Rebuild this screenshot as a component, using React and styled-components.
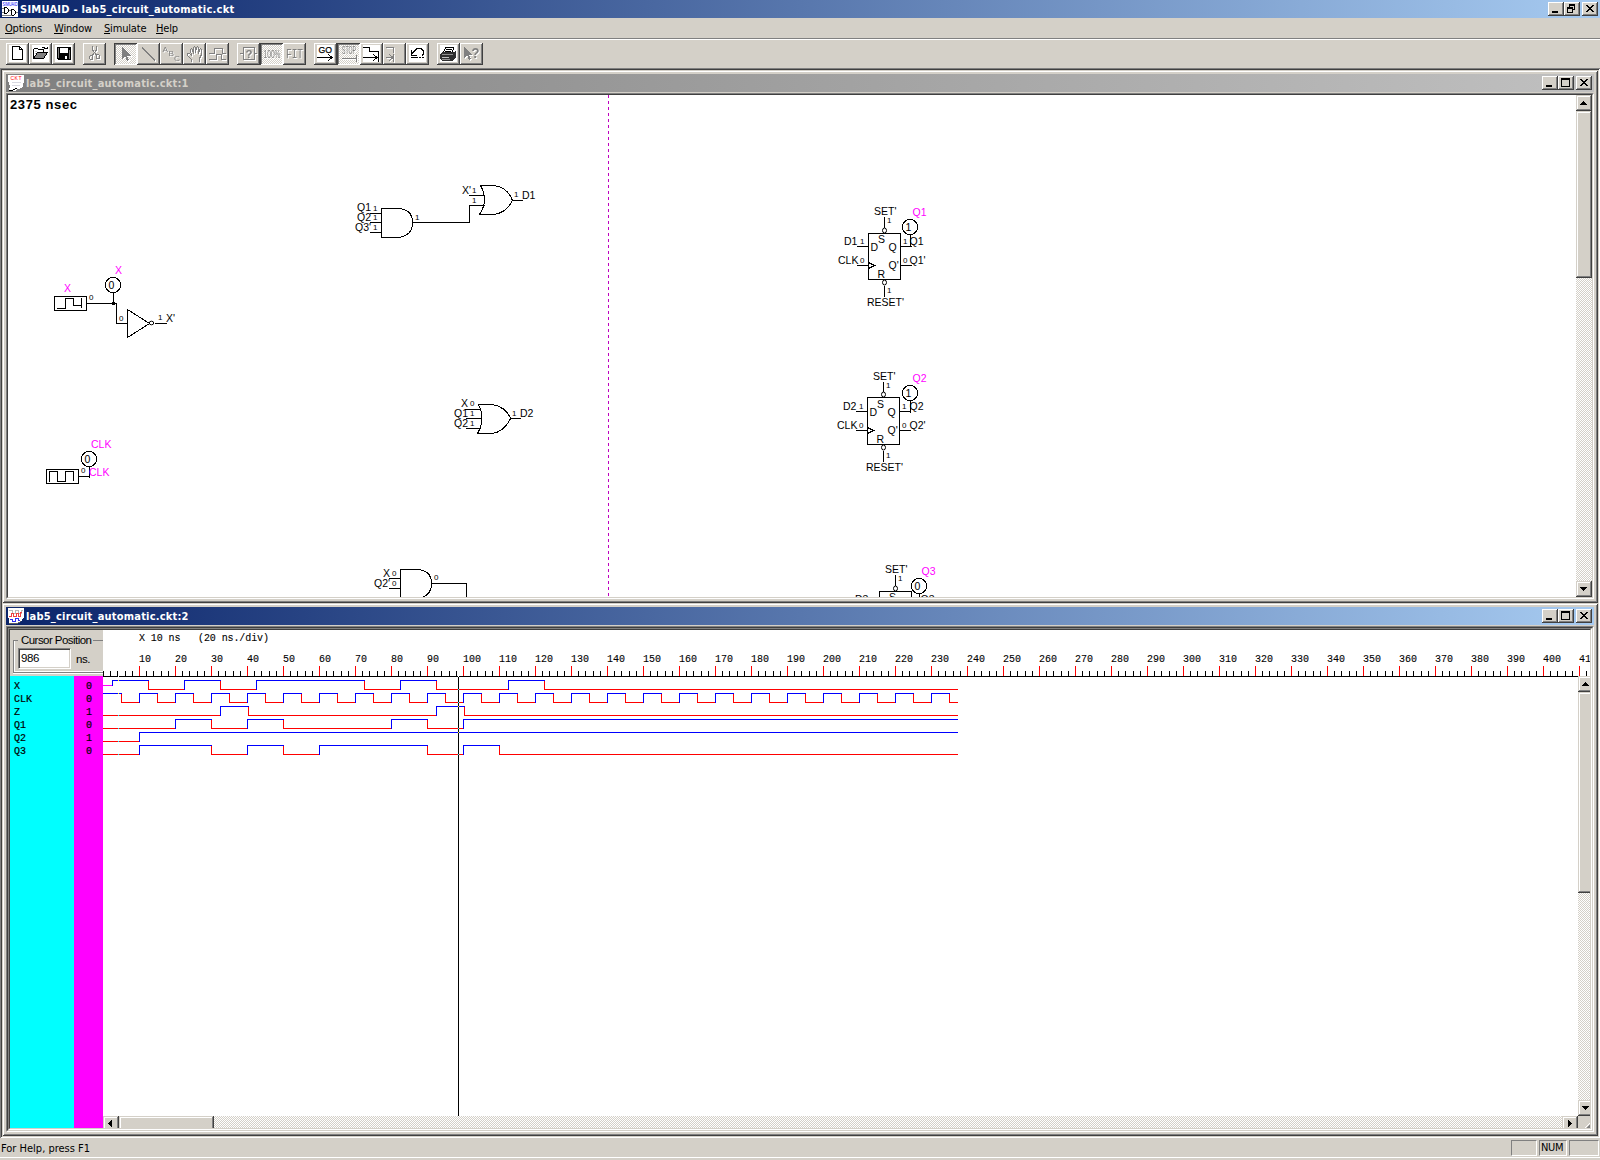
import React from "react";
import styled, { createGlobalStyle, css } from "styled-components";

const FACE = "#d4d0c8";
const UI = '"DejaVu Sans Condensed", "DejaVu Sans", "Open Sans", sans-serif';
const ARIAL = '"Liberation Sans", Arial, sans-serif';
const MONO = '"Liberation Mono", "Courier New", monospace';

const Global = createGlobalStyle`
  * { box-sizing: border-box; }
  html, body { margin: 0; padding: 0; background: ${FACE}; overflow: hidden; }
`;

const raised = css`
  background: ${FACE};
  box-shadow: inset -1px -1px #404040, inset 1px 1px #fff, inset -2px -2px #808080;
`;
const checker = css`
  background: conic-gradient(#fff 25%, ${FACE} 0 50%, #fff 0 75%, ${FACE} 0) 0 0 / 2px 2px;
`;

const Desktop = styled.div`
  width: 1600px;
  height: 1160px;
  display: flex;
  flex-direction: column;
  background: ${FACE};
  font-family: ${UI};
  font-size: 11px;
  color: #000;
  overflow: hidden;
`;

const TitleBar = styled.div`
  display: flex;
  align-items: center;
  flex: none;
  height: 18px;
  padding: 0 2px;
  background: ${(p) =>
    p.$inactive
      ? "linear-gradient(90deg,#808080,#c0c0c0)"
      : "linear-gradient(90deg,#0a246a,#a6caf0)"};
`;
const TitleText = styled.div`
  flex: 1;
  height: 18px;
  padding-top: 1px;
  margin-left: 2px;
  font-weight: bold;
  line-height: 17px;
  white-space: pre;
  letter-spacing: ${(p) => p.$spacing || 0}px;
  color: ${(p) => (p.$inactive ? FACE : "#fff")};
`;
const CaptionGroup = styled.div`
  display: flex;
  margin-left: 2px;
`;
const CaptionBox = styled.div`
  ${raised}
  width: 16px;
  height: 14px;
  svg { display: block; }
`;

const MenuBar = styled.div`
  display: flex;
  flex: none;
  height: 22px;
  padding: 0 5px;
  border-bottom: 1px solid #fff;
  box-shadow: inset 0 -1px #808080;
`;
const MenuItem = styled.div`
  width: ${(p) => p.$w}px;
  line-height: 21px;
  letter-spacing: -0.18px;
  &::first-letter { text-decoration: underline; }
`;

const ToolBar = styled.div`
  display: flex;
  flex: none;
  height: 28px;
  gap: 8px;
  padding: 3px 6px;
`;
const ToolGroup = styled.div`
  display: flex;
`;
const ToolButton = styled.div`
  width: 23px;
  height: 22px;
  ${raised}
  ${(p) =>
    p.$down &&
    css`
      ${checker}
      box-shadow: inset 1px 1px #404040, inset -1px -1px #fff, inset 2px 2px #808080;
    `}
  svg { display: block; }
`;
const Embossed = styled.g`
  color: #808080;
  filter: drop-shadow(1px 1px 0 #fff);
`;

const Workspace = styled.div`
  flex: none;
  height: 1070px;
  display: flex;
  flex-direction: column;
  padding: 2px;
  background: #808080;
  box-shadow: inset 1px 1px #808080, inset -1px -1px #fff, inset 2px 2px #404040, inset -2px -2px ${FACE};
`;
const ChildWindow = styled.div`
  flex: none;
  height: ${(p) => p.$h}px;
  display: flex;
  flex-direction: column;
  background: ${FACE};
  border-left: 1px solid ${FACE};
  border-top: 1px solid ${FACE};
  padding: 3px 4px 4px 3px;
  box-shadow: inset -1px -1px #404040, inset 1px 1px #fff, inset -2px -2px #808080;
`;
const ClientEdge = styled.div`
  flex: 1;
  min-height: 0;
  display: flex;
  margin-top: ${(p) => p.$gap || 0}px;
  border: 1px solid;
  border-color: #808080 #fff #fff #808080;
  > * { flex: 1; }
`;
const InnerEdge = styled.div`
  min-width: 0;
  display: flex;
  border: 1px solid;
  border-color: #404040 ${FACE} ${FACE} #404040;
  background: #fff;
  overflow: hidden;
`;

const Canvas = styled.svg`
  display: block;
  flex: none;
`;

const VBar = styled.div`
  ${checker}
  flex: none;
  width: 16px;
  ${(p) => p.$h && css`height: ${p.$h}px;`}
  display: flex;
  flex-direction: column;
  justify-content: space-between;
`;
const HBar = styled.div`
  ${checker}
  flex: none;
  width: 1475px;
  height: 16px;
  display: flex;
  justify-content: space-between;
`;
const BarStart = styled.div`
  display: flex;
  flex-direction: ${(p) => (p.$vertical ? "column" : "row")};
`;
const ScrollPart = styled.div`
  width: ${(p) => p.$w || 16}px;
  height: ${(p) => p.$h || 16}px;
  background: ${FACE};
  box-shadow: inset -1px -1px #404040, inset 1px 1px ${FACE}, inset -2px -2px #808080, inset 2px 2px #fff;
  svg { display: block; }
`;

const Scope = styled.div`
  display: flex;
  flex-direction: column;
  width: 1580px;
  height: 498px;
  overflow: hidden;
`;
const ScopeHead = styled.div`
  display: flex;
  flex: none;
  height: 46px;
`;
const ScopeBody = styled.div`
  display: flex;
  flex: none;
  height: 452px;
`;
const CursorPanel = styled.div`
  width: 93px;
  height: 46px;
  background: ${FACE};
  padding: 4px 0 0 3px;
  font-family: ${ARIAL};
  font-size: 11.5px;
  overflow: hidden;
`;
const CursorGroup = styled.fieldset`
  width: 100px;
  height: 39px;
  margin: 0;
  padding: 0 0 0 4px;
  border: 1px solid #808080;
  box-shadow: inset 1px -1px #fff, 0 1px #fff;
  min-width: 0;
`;
const CursorLegend = styled.legend`
  padding: 0 2px 0 3px;
  margin-left: 0;
  height: 12px;
  line-height: 12px;
  letter-spacing: -0.55px;
  white-space: pre;
`;
const CursorRow = styled.div`
  display: flex;
  align-items: center;
  gap: 5px;
  padding-top: 2px;
  letter-spacing: -0.4px;
`;
const CursorInput = styled.div`
  width: 53px;
  height: 21px;
  padding-left: 2px;
  line-height: 18px;
  background: #fff;
  border: 1px solid;
  border-color: #808080 #fff #fff #808080;
  box-shadow: inset 1px 1px #404040, inset -1px -1px ${FACE};
`;
const SignalColumn = styled.div`
  flex: none;
  width: ${(p) => p.$w}px;
  height: 452px;
  padding: 4px 0 0 ${(p) => p.$pad}px;
  background: ${(p) => p.$bg};
  font: 10px/13px ${MONO};
  -webkit-text-stroke: 0.2px #000;
`;
const SignalCell = styled.div`
  height: 13px;
`;
const WaveColumn = styled.div`
  flex: none;
  width: 1475px;
`;
const SideColumn = styled.div`
  flex: none;
  width: 16px;
  display: flex;
  flex-direction: column;
`;
const GripCorner = styled.div`
  height: 12px;
  background: ${FACE};
  svg { display: block; }
`;

const StatusBar = styled.div`
  display: flex;
  flex: none;
  height: 20px;
  padding: 2px 1px 1px 1px;
  gap: 2px;
  border-bottom: 1px solid #fff;
`;
const StatusText = styled.div`
  flex: 1;
  line-height: 17px;
`;
const StatusPane = styled.div`
  width: ${(p) => p.$w}px;
  height: 16px;
  padding-left: 1px;
  line-height: 14px;
  letter-spacing: -0.3px;
  border: 1px solid;
  border-color: #808080 #fff #fff #808080;
`;

/* ---------- caption and scroll glyphs ---------- */
const GLYPHS = {
  min: <rect x="4" y="9" width="6" height="2" />,
  max: <path d="M3 2h9v9H3zM4 4v6h7V4z" fillRule="evenodd" />,
  restore: (
    <path
      d="M5 2h6v6H9V7h1V4H6v1H5zM3 5h6v6H3zM4 7v3h4V7z"
      fillRule="evenodd"
    />
  ),
  close: (
    <path d="M4 3h2v1h1v1h2V4h1V3h2v1h-1v1h-1v1H9v1h1v1h1v1h1v1h-2V9H9V8H7v1H6v1H4V9h1V8h1V7h1V6H6V5H5V4H4z" />
  ),
};
const Caption = ({ kind }) => (
  <CaptionBox>
    <svg width="16" height="14" shapeRendering="crispEdges">{GLYPHS[kind]}</svg>
  </CaptionBox>
);
const CaptionButtons = ({ middle }) => (
  <>
    <CaptionGroup>
      <Caption kind="min" />
      <Caption kind={middle} />
    </CaptionGroup>
    <CaptionGroup>
      <Caption kind="close" />
    </CaptionGroup>
  </>
);
const ARROWS = {
  up: "M7 6h1v1h1v1h1v1h1v1H4V9h1V8h1V7h1z",
  down: "M4 6h7v1h-1v1H9v1H8v1H7V9H6V8H5V7H4z",
  left: "M5 7h1V6h1V5h1V4h1v7H8v-1H7V9H6V8H5z",
  right: "M6 4h1v1h1v1h1v1h1v1H9v1H8v1H7v1H6z",
};
const Arrow = ({ dir }) => (
  <ScrollPart>
    <svg width="16" height="16" shapeRendering="crispEdges">
      <path d={ARROWS[dir]} />
    </svg>
  </ScrollPart>
);

const AppIcon = () => (
  <svg width="16" height="16" shapeRendering="crispEdges">
    <rect width="16" height="16" fill="#fff" />
    <text x="0.5" y="4.5" fontSize="4.5" textLength="15" lengthAdjust="spacingAndGlyphs" fill="#00f" fontFamily={ARIAL}>SIMUAID</text>
    <path d="M0 7.500h2M0 11.500h2M6 9.500h3M14 11.500h2M0 14.500h10" fill="none" stroke="#808080" />
    <path d="M2.500 6v7M3 6.500h2M3 12.500h2M5 7.500h1M5 11.500h1M6.500 8v3M9.500 8v6M10 8.500h2M12 9.500h1M13.500 10v3M12 13.500h1M10 14.500h2" fill="none" stroke="#000" />
  </svg>
);
const CktIcon = () => (
  <svg width="16" height="16" shapeRendering="crispEdges">
    <path d="M0 0h16v7l-1 2v3l-2 1-3 1-3 2H1l1-5-2-5z" fill="#fff" />
    <text x="2.500" y="5" fontSize="5" textLength="11" lengthAdjust="spacing" fill="#f00" fontFamily={ARIAL}>CKT</text>
    <path d="M4 7.500h9M4 10.500h8" stroke="#d8d8e0" />
    <path d="M1 15.500h4M5 14.500h2M7 13.500h2" stroke="#000" />
  </svg>
);
const WaveIcon = () => (
  <svg width="16" height="16" shapeRendering="crispEdges">
    <path d="M0 0h16v9l-2 3-3 3H1V10H0z" fill="#fff" />
    <path d="M1 2.500h3v3h3v-3h3v3h3v-3h2" fill="none" stroke="#b8b8b8" />
    <path d="M1 8.500h2v-3h2v3h3v-3h2v3h2v-4h2" fill="none" stroke="#f04040" />
    <path d="M2 11.500h2v2h3v-3h3v2h2" fill="none" stroke="#3030f0" />
    <path d="M1 15.500h9M10 14.500h2M12 13.500h1" stroke="#606060" />
  </svg>
);

/* ---------- toolbar drawings, 23 x 22 grid ---------- */
const TT = ({ x, y, s, w, children, ...rest }) => (
  <text x={x} y={y} fontSize={s} textLength={w} lengthAdjust="spacingAndGlyphs" fontFamily={ARIAL} fill="currentColor" {...rest}>
    {children}
  </text>
);
const line = { fill: "none", stroke: "currentColor" };
const ICONS = {
  fresh: (
    <path d="M6.500 3.500h7l3 3v10h-10zM13.500 3.500v3h3" {...line} fill="#fff" />
  ),
  open: (
    <>
      <path d="M4.500 15.500v-9l1-1h3l1 1h5v3M13 4.500h2l1 1h2v-2M17.500 5.500h-2" {...line} />
      <path d="M4.500 15.500l4-6h10l-4 6z" fill="#808080" stroke="#000" />
      <path d="M6 8.500h2M6 10.500h1" stroke="#c0c0c0" />
    </>
  ),
  save: (
    <>
      <path d="M5 4h14v13H6l-1-1z" fill="#000" />
      <rect x="8" y="5" width="8" height="5" fill="#fff" />
      <path d="M6 5h1v10H6zM17 7h1v9h-1z" fill="#808080" />
      <rect x="13" y="13" width="2" height="3" fill="#fff" />
    </>
  ),
  cut: (
    <path d="M9.500 3v4l4 5M13.500 3v4l-4 5M7.500 12.500h2v4h-2l-1-1v-2zM13.500 11.500h2l1 1v3h-3z" {...line} />
  ),
  pointer: (
    <path d="M8 4v12l3-3 2 5 2-1-2-4h4z" fill="currentColor" />
  ),
  wire: <path d="M5 4.500L18 17.500" {...line} />,
  abc: (
    <>
      <TT x="2.500" y="9" s="8" w="5.500">A</TT>
      <TT x="8.500" y="13" s="8" w="5.500">B</TT>
      <TT x="14" y="18" s="8" w="6">C</TT>
    </>
  ),
  hand: (
    <path d="M8.500 18.500v-2l-4-4v-2h2l2 2-1-6 1-1 1 1 1 4v-6l1-1 1 1v5l1-5 1-1 1 1v6l1-4 1-1 1 1v5l-2 4v3" {...line} />
  ),
  wave: <path d="M3 10.500h5v-5h8v5h4M3 16.500h7v-5h5v5h5" {...line} />,
  query: (
    <>
      <path d="M3 10.500h3M17 10.500h3M6.500 4.500h11v12h-11z" {...line} />
      <TT x="8.500" y="15" s="11.500" w="7" fontWeight="bold">?</TT>
    </>
  ),
  hundred: <TT x="3.500" y="15" s="11" w="17">100%</TT>,
  fit: <TT x="3" y="15" s="12" w="17" fontFamily={MONO}>FIT</TT>,
  go: (
    <>
      <TT x="4.500" y="10" s="9.500" w="13.500" stroke="#000" strokeWidth="0.25">GO</TT>
      <path d="M3 14.500h15M14.500 11.500l3.500 3-3.500 3" {...line} />
    </>
  ),
  stop: (
    <>
      <TT x="5" y="11" s="10" w="14">STOP</TT>
      <path d="M5 15.500h14M19.500 12v7" {...line} />
    </>
  ),
  step: (
    <path d="M3 4.500h6.500v4h9M3 14.500h14M13.500 11.500l3.500 3-3.500 3M18.500 8v11" {...line} />
  ),
  run: (
    <path d="M3 4.500h7.500v5M10.500 11v8M3 14.500h7M6.500 11.500l3.500 3-3.500 3" {...line} />
  ),
  reset: (
    <path d="M9 7.500l2-2h4l2 2v4l-1 1M9.500 7L5 11.500M5.500 7v5h5M5 14.500h7M13 14.500h2M16 14.500h2" {...line} />
  ),
  print: (
    <>
      <path d="M6 10l3-6h8l-2 6z" fill="#fff" stroke="#000" />
      <path d="M9 6.500h6M8 8.500h6" stroke="#000" />
      <path d="M3 11l3-2h11l2-1v7l-4 3H5l-2-3z" fill="#303030" />
      <path d="M5 11.500h11M5 16.500h8" stroke="#909090" />
      <path d="M5 14.500h7" stroke="#c0c0c0" />
    </>
  ),
  help: (
    <>
      <path d="M4 4v11l3-3 2 5 2-1-2-4h3z" fill="currentColor" />
      <TT x="11.500" y="15" s="14" w="8" fontWeight="bold">?</TT>
    </>
  ),
};
const TOOLS = [
  [["fresh", 1], ["open", 1], ["save", 1]],
  [["cut", 0]],
  [["pointer", 0, 1], ["wire", 0], ["abc", 0], ["hand", 0], ["wave", 0]],
  [["query", 0], ["hundred", 0, 1], ["fit", 0]],
  [["go", 1], ["stop", 0, 1], ["step", 1], ["run", 0], ["reset", 1]],
  [["print", 1], ["help", 0]],
];
const Tool = ({ name, enabled, down }) => (
  <ToolButton $down={down}>
    <svg width="23" height="22" shapeRendering="crispEdges">
      {enabled ? (
        <>
          <rect x="3" y="2" width="17" height="17" fill="#fff" />
          <g color="#000">{ICONS[name]}</g>
        </>
      ) : (
        <Embossed>{ICONS[name]}</Embossed>
      )}
    </svg>
  </ToolButton>
);

/* ---------- schematic ---------- */
const Ink = styled.g`
  fill: none;
  stroke: #000;
  stroke-width: 1;
  shape-rendering: crispEdges;
`;
const Bubble = styled.ellipse`
  fill: #fff;
  stroke: #000;
  shape-rendering: geometricPrecision;
`;
const NameText = styled.text`
  font-family: ${ARIAL};
  font-size: 10.500px;
  fill: ${(p) => (p.$probe ? "#f0f" : "#000")};
`;
const ValueText = styled.text`
  font-family: ${ARIAL};
  font-size: 8px;
  fill: #000;
`;
const N = ({ x, y, m, children }) => (
  <NameText x={x} y={y} $probe={m}>{children}</NameText>
);
const V = ({ x, y, children }) => <ValueText x={x} y={y}>{children}</ValueText>;

const Probe = ({ x, y, value }) => (
  <>
    <Ink><circle cx={x} cy={y} r="7.600" /></Ink>
    <N x={x - 4.5} y={y + 4}>{value}</N>
  </>
);

const FlipFlop = ({ n, dx, dy, top = 233.5, px, py, value }) => (
  <>
    <g transform={`translate(${dx} ${dy})`}>
      <Ink>
        <path d={`M868.500 ${top}h32V279.500h-32z`} />
        <path d="M884.500 217v10.500M884.500 286v11M857 246.500h11M857 265.500h11M868.500 262.500l6 3-6 3M900 246.500h12M900 265.500h12" />
      </Ink>
      <Bubble cx="884.500" cy={top - 3} rx="2" ry="2.500" />
      <Bubble cx="884.500" cy="282.500" rx="2" ry="2.500" />
      <N x={874} y={215}>SET'</N>
      <V x={887} y={223}>1</V>
      <N x={878} y={243}>S</N>
      <N x={870.5} y={251}>D</N>
      <N x={888.5} y={251}>Q</N>
      <N x={888.5} y={269}>Q'</N>
      <N x={877.5} y={278}>R</N>
      <N x={844} y={245}>{`D${n}`}</N>
      <V x={860} y={244}>1</V>
      <N x={838} y={264}>CLK</N>
      <V x={860} y={263}>0</V>
      <V x={887} y={293}>1</V>
      <N x={867} y={306}>RESET'</N>
      <V x={903} y={244}>1</V>
      <V x={903} y={263}>0</V>
      <N x={909.5 + (n === 2 ? 1 : 0)} y={245}>{`Q${n}`}</N>
      <N x={909.5 + (n === 2 ? 1 : 0)} y={264}>{`Q${n}'`}</N>
    </g>
    <Ink><path d={`M${px + 0.5} ${py + 8}v12`} /></Ink>
    <Probe x={px} y={py} value={value} />
    <N x={px + 2.5} y={py - 11.5} m>{`Q${n}`}</N>
  </>
);

const Schematic = () => (
  <Canvas width="1568" height="502" viewBox="8 95 1568 502">
    <text x="10" y="109" fontFamily={ARIAL} fontWeight="bold" fontSize="13" textLength="67">2375 nsec</text>
    <path d="M608.500 95V597" stroke="#c000c0" strokeDasharray="3 3" shapeRendering="crispEdges" />
    <Ink>
      <path d="M398 208.500h-16.500v29H398Q412.500 236 412.500 222.500T398 208.500" />
      <path d="M412 222.500h57.500v-17h15M370 213.500h12M370 222.500h12M370 232.500h12" />
      <path d="M480.500 185.500h14Q508 188 512.500 200.500Q506 213 494 214.500h-14.500Q489 200 480.500 185.500M469 195.500h16M512 200.500h11" />
      <path d="M478.500 404.500h14Q506 407 510.500 418.500Q504 432 492 433.500h-14.500Q486 419 478.500 404.500M465 409.500h16M466 418.500h16M466 428.500h15M510 418.500h11" />
      <path d="M417 569.500h-16.500v29H417Q431.500 597 431.500 583.500T417 569.500M431 583.500h35.500V600M389 578.500h12M389 588.500h12" />
    </Ink>
    <N x={357} y={211}>Q1</N><V x={373} y={211}>1</V>
    <N x={357} y={221}>Q2</N><V x={373} y={220}>1</V>
    <N x={355} y={231}>Q3'</N><V x={373} y={230}>1</V>
    <V x={415} y={220}>1</V>
    <N x={462} y={194}>X'</N><V x={472} y={193}>1</V><V x={472} y={203}>1</V>
    <V x={514} y={197}>1</V><N x={522} y={199}>D1</N>
    <N x={461} y={407}>X</N><V x={470} y={406}>0</V>
    <N x={454} y={417}>Q1</N><V x={470} y={416}>1</V>
    <N x={454} y={427}>Q2</N><V x={470} y={426}>1</V>
    <V x={512} y={416}>1</V><N x={520} y={417}>D2</N>
    <N x={383} y={577}>X</N><V x={392} y={576}>0</V>
    <N x={374} y={587}>Q2'</N><V x={392} y={586}>0</V>
    <V x={434} y={580}>0</V>

    <Ink>
      <path d="M54.500 296.500h32v14h-32zM57 308.500h8.500v-10h8v7h8M81.500 298v10" />
      <path d="M86 303.500h30.500v20h11M113.500 293v10M127.500 309.500v28l22-14zM155 323.500h12" />
      <path d="M46.500 469.500h32v14h-32zM49.500 482v-10.500h8v10h8v-10h8v9.500M78 476.500h11.500v-9.500v11" />
    </Ink>
    <Bubble cx="151.500" cy="323" rx="2.200" ry="1.800" />
    <rect x="112" y="302" width="3" height="3" />
    <N x={64} y={292} m>X</N><V x={89} y={300}>0</V>
    <Probe x={113} y={285} value="0" />
    <N x={115} y={274} m>X</N>
    <V x={119} y={321}>0</V><V x={158} y={320}>1</V><N x={166} y={322}>X'</N>
    <Probe x={89} y={459} value="0" />
    <N x={91} y={448} m>CLK</N>
    <V x={81} y={473}>0</V>
    <N x={89} y={476} m>CLK</N>

    <FlipFlop n={1} dx={0} dy={0} px={910} py={227} value="1" />
    <FlipFlop n={2} dx={-1} dy={165} top={232.5} px={910} py={393} value="1" />
    <FlipFlop n={3} dx={11} dy={358} px={919} py={586} value="0" />
  </Canvas>
);

/* ---------- timing diagram ---------- */
const LEFT = 103;
const RIGHT = 958;
const clkEdges = [];
for (let x = 121; x < RIGHT; x += 18) clkEdges.push(x);
const SIGNALS = [
  { name: "X", value: 0, start: 1, from: 112, edges: [148, 184, 220, 256, 364, 400, 436, 508, 544] },
  { name: "CLK", value: 0, start: 1, edges: clkEdges },
  { name: "Z", value: 1, start: 0, edges: [220, 248, 436, 464] },
  { name: "Q1", value: 0, start: 0, edges: [175, 211, 247, 283, 391, 427, 463] },
  { name: "Q2", value: 1, start: 0, edges: [139] },
  { name: "Q3", value: 0, start: 0, edges: [139, 211, 247, 283, 319, 427, 463, 499] },
];

const trace = (signal, row) => {
  const hi = 680.5 + row * 13;
  const lo = hi + 9;
  let x = signal.from || LEFT;
  let level = signal.start;
  let high = "";
  let low = "";
  [...signal.edges, RIGHT].forEach((edge) => {
    const end = edge === RIGHT ? edge : edge + 1;
    if (level) high += `M${x} ${hi}H${end}`;
    else low += `M${x} ${lo}H${end}`;
    if (edge !== RIGHT) {
      const v = `M${edge + 0.5} ${hi - 0.5}V${lo + 0.5}`;
      if (level) low += v;
      else high += v;
    }
    x = edge;
    level = level ? 0 : 1;
  });
  return { high, low };
};

const Waves = () => (
  <Canvas width="1475" height="440" viewBox="103 676 1475 440" shapeRendering="crispEdges" fill="none">
    <path d="M103 676.500H1578" stroke="#000" />
    <path d="M103 685.500H112" stroke="#f0f" />
    <path d="M112.500 680V686" stroke="#00f" />
    {SIGNALS.map((s, i) => {
      const t = trace(s, i);
      return (
        <g key={s.name}>
          <path d={t.low} stroke="#f00" />
          <path d={t.high} stroke="#00f" />
        </g>
      );
    })}
    <path d="M118.500 676V677M458.500 676v1" stroke="#fff" />
    <path d="M118.500 680v1M118.500 693v1" stroke="#ff0" />
    <path d="M118.500 715v1M118.500 728v1M118.500 741v1M118.500 754v1" stroke="#0ff" />
    <path d="M458.500 677V1116" stroke="#000" />
    <path d="M458.500 706v1M458.500 732v1" stroke="#ff0" />
    <path d="M458.500 689v1M458.500 702v1M458.500 728v1M458.500 754v1" stroke="#0ff" />
  </Canvas>
);

const ScaleText = styled.text`
  font-family: ${MONO};
  font-size: 10px;
  white-space: pre;
  stroke: #000;
  stroke-width: 0.1px;
`;
const Ruler = () => {
  let minor = "";
  let major = "";
  const labels = [];
  for (let i = 0; i <= 206; i++) {
    const x = Math.round(103 + i * 7.2);
    if (i % 5 === 0 && i > 0) {
      major += `M${x + 0.5} 666V676`;
      labels.push([x, i * 2]);
    } else minor += `M${x + 0.5} 671V676`;
  }
  return (
    <Canvas width="1487" height="46" viewBox="103 630 1487 46">
      <ScaleText x="139" y="641" textLength="130">X 10 ns   (20 ns./div)</ScaleText>
      {labels.map(([x, n]) => (
        <ScaleText key={n} x={x} y="662">{n}</ScaleText>
      ))}
      <path d={minor} stroke="#000" shapeRendering="crispEdges" />
      <path d={major} stroke="#f00" shapeRendering="crispEdges" />
    </Canvas>
  );
};

export default function App() {
  return (
    <Desktop>
      <Global />
      <TitleBar>
        <AppIcon />
        <TitleText $spacing={0.26}>SIMUAID - lab5_circuit_automatic.ckt</TitleText>
        <CaptionButtons middle="restore" />
      </TitleBar>
      <MenuBar>
        <MenuItem $w={49}>Options</MenuItem>
        <MenuItem $w={50}>Window</MenuItem>
        <MenuItem $w={52}>Simulate</MenuItem>
        <MenuItem $w={40}>Help</MenuItem>
      </MenuBar>
      <ToolBar>
        {TOOLS.map((group, i) => (
          <ToolGroup key={i}>
            {group.map(([name, enabled, down]) => (
              <Tool key={name} name={name} enabled={!!enabled} down={!!down} />
            ))}
          </ToolGroup>
        ))}
      </ToolBar>
      <Workspace>
        <ChildWindow $h={533}>
          <TitleBar $inactive>
            <CktIcon />
            <TitleText $inactive $spacing={0.2}>lab5_circuit_automatic.ckt:1</TitleText>
            <CaptionButtons middle="max" />
          </TitleBar>
          <ClientEdge $gap={1}>
            <InnerEdge>
              <Schematic />
              <VBar>
                <BarStart $vertical>
                  <Arrow dir="up" />
                  <ScrollPart $h={167} />
                </BarStart>
                <Arrow dir="down" />
              </VBar>
            </InnerEdge>
          </ClientEdge>
        </ChildWindow>
        <ChildWindow $h={533}>
          <TitleBar>
            <WaveIcon />
            <TitleText $spacing={0.2}>lab5_circuit_automatic.ckt:2</TitleText>
            <CaptionButtons middle="max" />
          </TitleBar>
          <ClientEdge $gap={1}>
            <InnerEdge>
              <ClientEdge>
                <InnerEdge>
                  <Scope>
                    <ScopeHead>
                      <CursorPanel>
                        <CursorGroup>
                          <CursorLegend>Cursor Position</CursorLegend>
                          <CursorRow>
                            <CursorInput>986</CursorInput>
                            ns.
                          </CursorRow>
                        </CursorGroup>
                      </CursorPanel>
                      <Ruler />
                    </ScopeHead>
                    <ScopeBody>
                      <SignalColumn $w={64} $pad={4} $bg="#0ff">
                        {SIGNALS.map((s) => <SignalCell key={s.name}>{s.name}</SignalCell>)}
                      </SignalColumn>
                      <SignalColumn $w={29} $pad={12} $bg="#f0f">
                        {SIGNALS.map((s) => <SignalCell key={s.name}>{s.value}</SignalCell>)}
                      </SignalColumn>
                      <WaveColumn>
                        <Waves />
                        <HBar>
                          <BarStart>
                            <Arrow dir="left" />
                            <ScrollPart $w={95} />
                          </BarStart>
                          <Arrow dir="right" />
                        </HBar>
                      </WaveColumn>
                      <SideColumn>
                        <VBar $h={440}>
                          <BarStart $vertical>
                            <Arrow dir="up" />
                            <ScrollPart $h={201} />
                          </BarStart>
                          <Arrow dir="down" />
                        </VBar>
                        <GripCorner>
                          <svg width="12" height="12" shapeRendering="crispEdges">
                            <path d="M8 12l4-4v4z" fill="#808080" />
                            <path d="M7 12l5-5" stroke="#fff" />
                          </svg>
                        </GripCorner>
                      </SideColumn>
                    </ScopeBody>
                  </Scope>
                </InnerEdge>
              </ClientEdge>
            </InnerEdge>
          </ClientEdge>
        </ChildWindow>
      </Workspace>
      <StatusBar>
        <StatusText>For Help, press F1</StatusText>
        <StatusPane $w={26} />
        <StatusPane $w={28}>NUM</StatusPane>
        <StatusPane $w={30} />
      </StatusBar>
    </Desktop>
  );
}
